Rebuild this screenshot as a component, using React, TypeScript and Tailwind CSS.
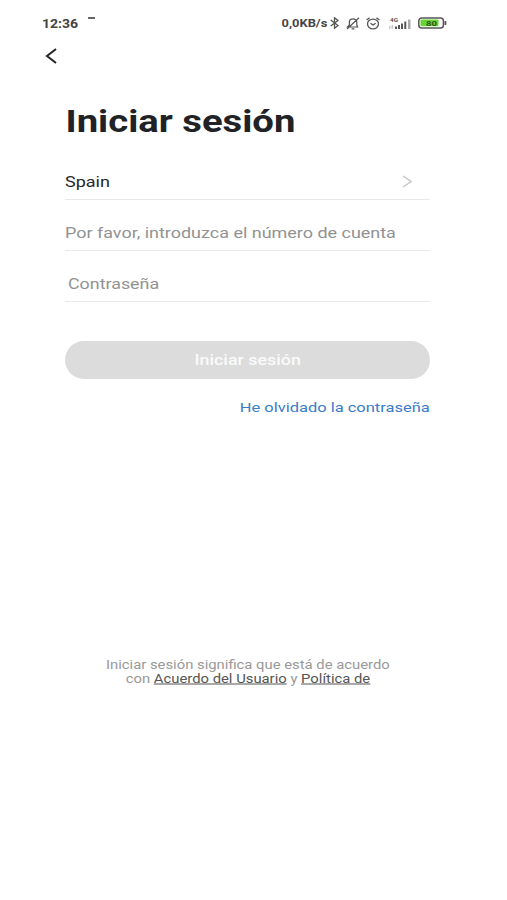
import type { ReactNode } from "react";

function StatusBar() {
  return (
    <div className="flex h-[46px] items-center text-[#444]">
      <span className="ml-[42px] w-[46px] text-[12px] leading-4 font-bold">
        <span className="inline-block origin-left translate-y-[0.5px] scale-x-[1.17]">12:36</span>
      </span>
      <span className="mb-[10px] h-[1.5px] w-[7px] bg-[#666]" />
      <span className="ml-[186px] w-[49px] text-[11.5px] leading-4 font-bold whitespace-nowrap">
        <span className="inline-block origin-left translate-x-[0.5px] scale-x-[1.12]">0,0KB/s</span>
      </span>
      <svg className="h-[12px] w-[9px]" viewBox="0 0 9 12" fill="none" stroke="#555" strokeWidth="1.3">
        <path d="M.7 3 8 8.5 4.5 11.3V.7L8 3.5.7 9" />
      </svg>
      <svg className="ml-[7px] h-[13px] w-[14px]" viewBox="0 0 14 13" fill="none" stroke="#555" strokeWidth="1.2">
        <path d="M1.5 10h10.2L10.8 8V5C10.8 .9 3.4 .9 3.4 5v3zM5.6 11.8h2.8M1 12 13 .8" />
      </svg>
      <svg className="ml-[6px] h-[13px] w-[14px]" viewBox="0 0 14 13" fill="none" stroke="#555" strokeWidth="1.3">
        <ellipse cx="7" cy="7" rx="5.5" ry="4.8" />
        <path d="M.6 3 3.5.9M13.4 3 10.5.9M4.5 6.3 7 8l2.7-1.7" />
      </svg>
      <svg className="ml-[8px] h-[13px] w-[24px]" viewBox="0 0 24 13">
        <text x="2" y="5.2" fontSize="5.5" fontWeight="700" fontFamily="Roboto, sans-serif" fill="#555" textLength="8" lengthAdjust="spacingAndGlyphs">4G</text>
        <path d="M1 9h1.5v3H1zM3.5 8H5v4H3.5z" fill="#ccc" />
        <path d="M7 9.5h2V12H7zM10 8h2v4h-2zM13 6.5h2V12h-2zM16.3 4.5h2V12h-2z" fill="#555" />
        <path d="M20 2.5h2.5V12H20z" fill="#aaa" />
      </svg>
      <svg className="ml-[6px] h-[12px] w-[29px]" viewBox="0 0 29 12">
        <rect x=".8" y=".9" width="24.6" height="10" rx="3" fill="#fff" stroke="#555" strokeWidth="1.5" />
        <rect x="2.5" y="2.5" width="18" height="6.8" rx="1" fill="#67d633" />
        <path d="M26.5 4h1.8v4h-1.8z" fill="#555" />
        <text x="8" y="8.7" fontSize="7.5" fontWeight="700" fontFamily="Roboto, sans-serif" fill="#35531f" textLength="11" lengthAdjust="spacingAndGlyphs">80</text>
      </svg>
    </div>
  );
}

function Row({ children }: { children: ReactNode }) {
  return (
    <div className="flex h-[51px] items-center justify-between border-b-[1.5px] border-[#e9e9e9] pt-[14px] text-[15px] whitespace-nowrap">
      {children}
    </div>
  );
}

export default function App() {
  return (
    <main className="h-[900px] w-[507px] overflow-hidden bg-white font-['Roboto',sans-serif]">
      <StatusBar />
      <header className="flex h-[21px] items-center pl-[45px]">
        <svg className="mb-[1px] h-[16px] w-[12px]" viewBox="0 0 12 16" fill="none" stroke="#222" strokeWidth="2">
          <path d="M11 1 2 8l9 7" />
        </svg>
      </header>
      <section className="ml-[65px] flex w-[364.5px] flex-col">
        <h1 className="mt-[34px] h-[40px] text-[32px] leading-[40px] font-bold whitespace-nowrap text-[#202226]">
          <span className="inline-block origin-left translate-x-[0.5px] scale-x-[1.195]">Iniciar sesión</span>
        </h1>
        <div className="mt-[8px]">
          <Row>
            <span className="inline-block origin-left translate-y-[0.5px] scale-x-[1.2] text-[#25272a]">Spain</span>
            <svg className="mr-[18px] h-[13px] w-[10px]" viewBox="0 0 10 13" fill="none" stroke="#c4c4c4" strokeWidth="1.4">
              <path d="m1 1 8 5.5L1 12" />
            </svg>
          </Row>
          <Row>
            <span className="inline-block origin-left translate-y-[0.5px] scale-x-[1.197] text-[#929292]">Por favor, introduzca el número de cuenta</span>
          </Row>
          <Row>
            <span className="ml-[3px] inline-block origin-left translate-y-[0.5px] scale-x-[1.19] text-[#929292]">Contraseña</span>
          </Row>
        </div>
        <button className="mt-[38.5px] h-[38px] rounded-full bg-[#dcdcdc] text-[15px] font-medium text-[#fafafa]">
          <span className="inline-block translate-y-[0.5px] scale-x-[1.19]">Iniciar sesión</span>
        </button>
        <a className="mt-[18.5px] self-end text-[13.5px] leading-[20px] whitespace-nowrap text-[#3a7cc9]">
          <span className="inline-block origin-right scale-x-[1.22]">He olvidado la contraseña</span>
        </a>
      </section>
      <footer className="mt-[240px] ml-[98px] w-[300px] text-center text-[12px] leading-[14px] whitespace-nowrap text-[#999]">
        <p>
          <span className="inline-block translate-y-[0.5px] scale-x-[1.235]">Iniciar sesión significa que está de acuerdo</span>
        </p>
        <p>
          <span className="inline-block translate-y-[0.5px] scale-x-[1.235]">
            con <span className="text-[#555] underline">Acuerdo del Usuario</span> y <span className="text-[#555] underline">Política de</span>
          </span>
        </p>
      </footer>
    </main>
  );
}
